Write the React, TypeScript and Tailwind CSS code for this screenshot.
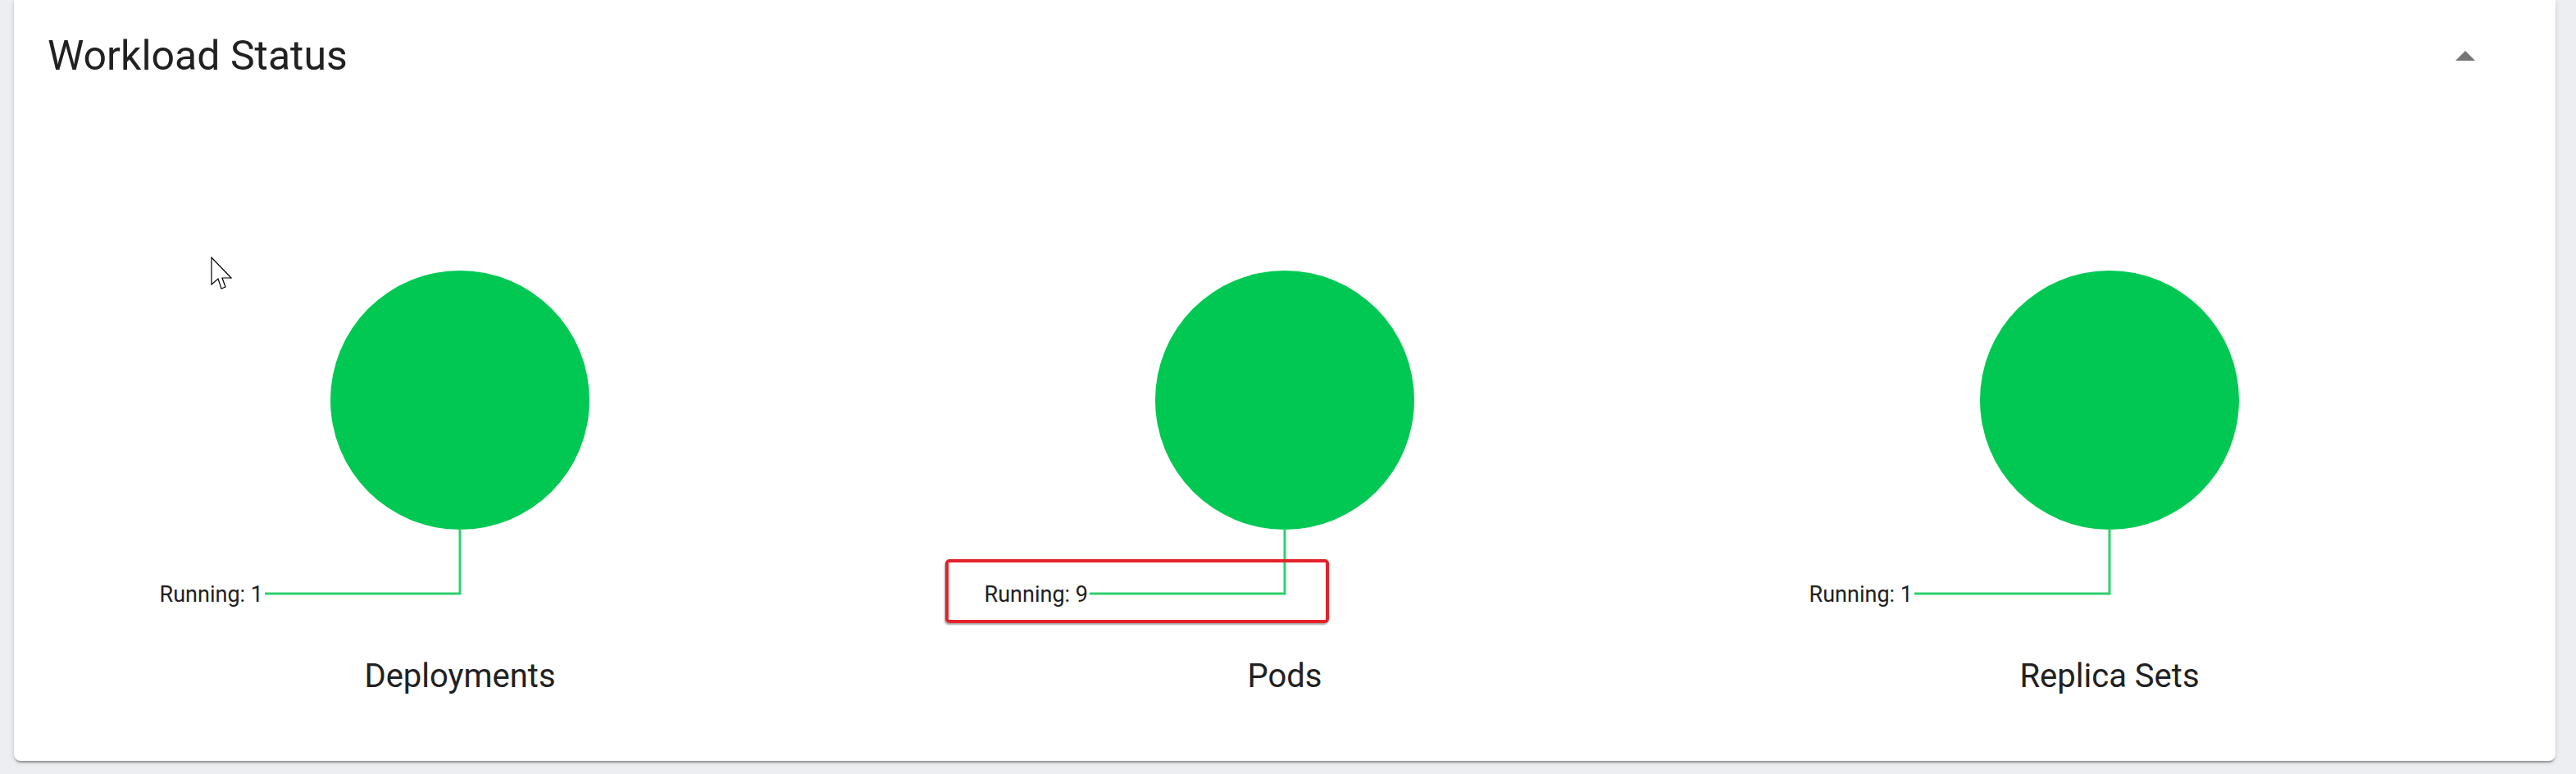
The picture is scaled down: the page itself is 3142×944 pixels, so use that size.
import React from 'react';

const charts = [
  { title: 'Deployments', running: 1, highlight: false },
  { title: 'Pods', running: 9, highlight: true },
  { title: 'Replica Sets', running: 1, highlight: false },
];

const StatusPie = ({ running }: { running: number }) => (
  <svg width="1006" height="460" viewBox="0 0 1006 460" className="block">
    <circle cx="503" cy="188" r="158" fill="#00c853" />
    <polyline points="503,345 503,424 265,424" fill="none" stroke="#2ed06e" strokeWidth="3" />
    <text
      x="263"
      y="425"
      textAnchor="end"
      dominantBaseline="central"
      fontFamily="Roboto, sans-serif"
      fontSize="27"
      fill="#212121"
    >
      Running: {running}
    </text>
  </svg>
);

const App = () => {
  return (
    <div className="relative min-h-[944px] bg-[#eceef1] pl-[17px] pr-[25px] font-['Roboto',sans-serif] text-[#212121]">
      <div className="h-[928px] rounded-b-[8px] bg-white px-[41px] shadow-[0_4px_2px_-2px_rgba(0,0,0,0.2),0_2px_2px_0_rgba(0,0,0,0.14),0_2px_6px_0_rgba(0,0,0,0.12)]">
        {/* Header */}
        <div className="flex items-center justify-between pt-[44px]">
          <h2 className="text-[50px] leading-[48px] font-normal">Workload Status</h2>
          <button className="mr-[45px] flex h-[48px] w-[48px] items-center justify-center">
            <svg width="24" height="12" viewBox="0 0 24 12">
              <path d="M0 12 L12 0 L24 12 Z" fill="#757575" />
            </svg>
          </button>
        </div>

        {/* Charts */}
        <div className="mt-[208px] grid grid-cols-3">
          {charts.map((c) => (
            <div key={c.title} className="relative flex flex-col items-center">
              <StatusPie running={c.running} />
              {c.highlight && (
                <div className="absolute left-[89px] top-[382px] h-[78px] w-[468px] rounded-[5px] border-4 border-[#e5222a] shadow-[-1px_2px_2px_rgba(0,0,0,0.35)]" />
              )}
              <div className="mt-[45px] text-[40px] leading-[40px]">{c.title}</div>
            </div>
          ))}
        </div>
      </div>

      {/* Mouse cursor */}
      <svg className="absolute left-[257px] top-[313px]" width="28" height="42" viewBox="-1 -1 28 42">
        <path d="M0 0 L0 33 L8 26 L12 38 L17 36 L13 25 L24 25 Z" fill="#ffffff" stroke="#000000" strokeWidth="1.2" strokeLinejoin="miter" />
      </svg>
    </div>
  );
};

export default App;
